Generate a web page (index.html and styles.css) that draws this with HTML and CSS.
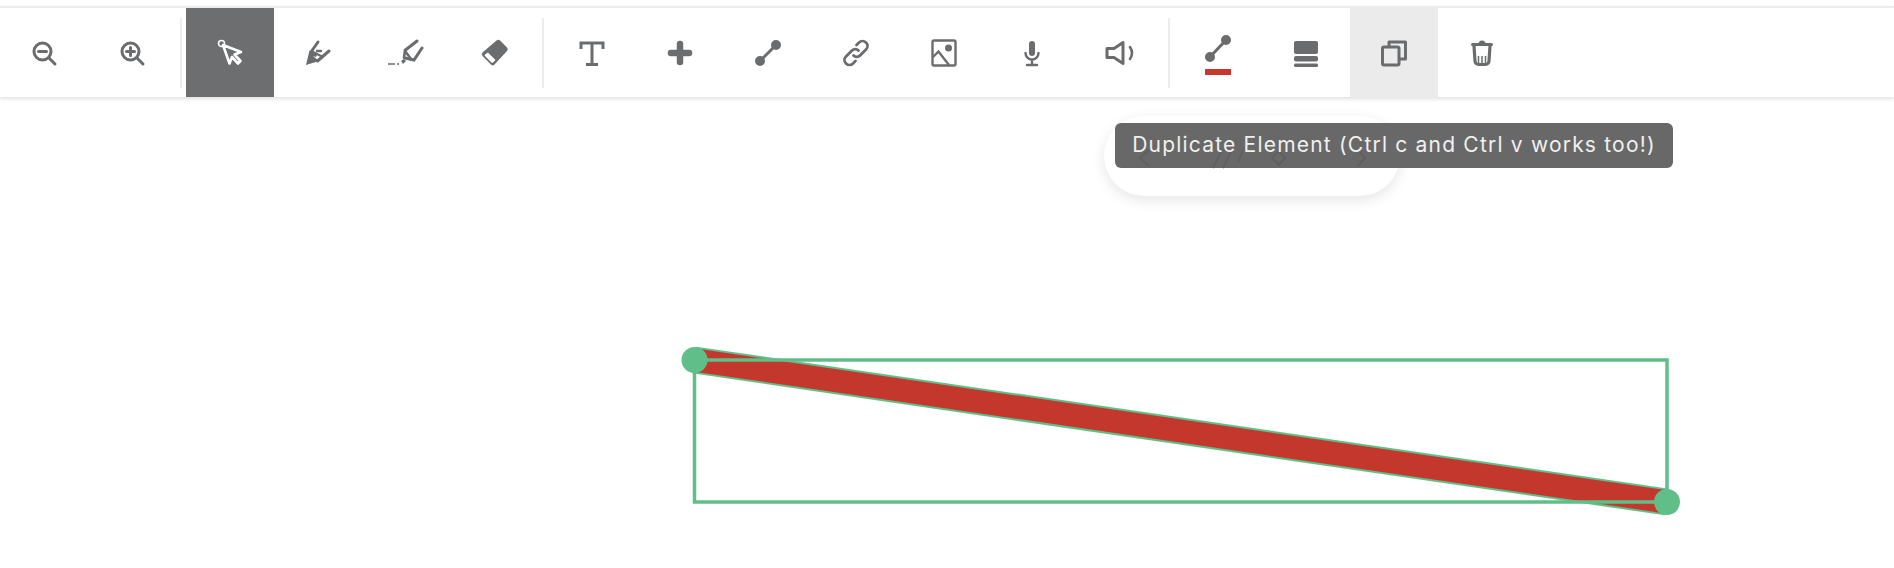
FILE: index.html
```html
<!DOCTYPE html>
<html lang="en">
<head>
    <meta charset="UTF-8">
    <title>Whiteboard</title>
    <link rel="stylesheet" href="styles.css">
</head>
<body>
    <div class="toolbar">
        <button class="tool">
            <svg class="icon" viewBox="0 0 30 30"><circle cx="13.500" cy="13.500" r="8.500"/><path d="M20 20l6 6M9.500 13.500h8"/></svg>
        </button>
        <button class="tool">
            <svg class="icon" viewBox="0 0 30 30"><circle cx="13.500" cy="13.500" r="8.500"/><path d="M20 20l6 6M9.500 13.500h8M13.500 9.500v8"/></svg>
        </button>
        <div class="separator"></div>

        <button class="tool tool-active">
            <svg class="icon" viewBox="0 0 30 30"><circle cx="6.500" cy="5.500" r="3" stroke-width="1.500"/><path stroke-width="2.600" stroke-linejoin="round" d="M8 7l18 7-6.500 2.500 6 6.500-2.500 2.500-6-6.500-2.500 6.500z"/></svg>
        </button>
        <button class="tool">
            <svg class="icon" viewBox="0 0 30 30"><path stroke-width="3" d="M15 4l-7 10M26 13L14.500 23"/><path class="solid" stroke="none" d="M6.500 12.500l4 1.500 3.500 3-1 2-3-1 6 5-13 4z"/><path stroke-width="2.400" d="M10 14l8 4M14 13l4 0"/></svg>
        </button>
        <button class="tool">
            <svg class="icon icon-wide" viewBox="0 0 36 30"><path stroke-width="3" d="M29 3l-11.500 9M34 10l-8 12-9-2"/><path stroke-width="2.600" d="M17 12l-1 8M17 13l6 8"/><path class="solid" stroke="none" d="M13 23l3-2 2 2-3 3z"/><path stroke-width="1.600" stroke-linecap="butt" d="M0 26h7M9 26h2"/></svg>
        </button>
        <button class="tool">
            <svg class="icon" viewBox="0 0 30 30"><path class="solid" stroke="none" d="M17.500 2.500a2.500 2.500 0 0 1 3.500 0l7 7a2.500 2.500 0 0 1 0 3.500l-12.500 13.500a2.500 2.500 0 0 1-3.500 0l-8.500-8.500a2.500 2.500 0 0 1 0-3.500z"/><path fill="#fff" stroke="none" d="M9 14.500l7.500 7.500-2.500 2.500a1 1 0 0 1-1.500 0l-6.500-6.500a1 1 0 0 1 0-1.500z"/></svg>
        </button>
        <div class="separator"></div>

        <button class="tool">
            <svg class="icon" viewBox="0 0 30 30"><path stroke-linecap="butt" d="M4 11V5h22v6M15 5v22M9 26.500h12"/></svg>
        </button>
        <button class="tool">
            <svg class="icon" viewBox="0 0 30 30"><path stroke-width="6.500" d="M15 6v18M6 15h18"/></svg>
        </button>
        <button class="tool">
            <svg class="icon" viewBox="0 0 30 30"><path d="M7 23L23 7"/><circle class="solid" cx="7" cy="23" r="3.500"/><circle class="solid" cx="23" cy="7" r="3.500"/></svg>
        </button>
        <button class="tool">
            <svg class="icon" viewBox="0 0 30 30"><path stroke-width="2.800" d="M12.500 17.500a4.500 4.500 0 0 0 6.500 0l6-6a4.900 4.900 0 0 0-7-7l-2.500 2.500"/><path stroke-width="2.800" d="M17.500 12.500a4.500 4.500 0 0 0-6.500 0l-6 6a4.900 4.900 0 0 0 7 7l2.500-2.500"/></svg>
        </button>
        <button class="tool">
            <svg class="icon" viewBox="0 0 30 30"><rect x="3.500" y="2.500" width="23" height="25" rx="1.500" stroke-width="2.400"/><path stroke-width="2.400" stroke-linecap="butt" d="M4 19l5.500-5.500L20 27"/><circle class="solid" cx="19.500" cy="10" r="3.500" stroke="none"/></svg>
        </button>
        <button class="tool">
            <svg class="icon" viewBox="0 0 30 30"><path stroke-width="6" d="M15 6v9"/><path stroke-width="2.400" d="M8.500 15a6.500 6.500 0 0 0 13 0M15 22v5M10 27h10"/></svg>
        </button>
        <button class="tool">
            <svg class="icon" viewBox="0 0 30 30"><path stroke-width="3" stroke-linejoin="round" d="M2 10.500h7L18 4.500v21l-9-6H2z"/><path stroke-width="2.600" d="M25 9q4 6 0 12"/></svg>
        </button>
        <div class="separator"></div>

        <button class="tool tool-color">
            <svg class="icon" viewBox="0 0 30 30"><path d="M7 24L23 7"/><circle class="solid" cx="7" cy="24" r="3.500"/><circle class="solid" cx="23" cy="7" r="3.500"/></svg>
            <span class="color-bar"></span>
        </button>
        <button class="tool">
            <svg class="icon" viewBox="0 0 30 30"><rect class="solid" stroke="none" x="3" y="3" width="24" height="13" rx="2"/><rect class="solid" stroke="none" x="3" y="18" width="24" height="5.500" rx="2"/><rect class="solid" stroke="none" x="3" y="25.500" width="24" height="3.500" rx="1.500"/></svg>
        </button>
        <button class="tool tool-hover">
            <svg class="icon" viewBox="0 0 30 30"><rect x="3.500" y="9" width="16.500" height="18" rx="1.500"/><path stroke-linejoin="round" d="M10 8.500V4h16.500v17h-6"/></svg>
        </button>
        <button class="tool">
            <svg class="icon" viewBox="0 0 30 30"><path stroke-width="3.200" d="M7 8l1 15a3.500 3.500 0 0 0 3.500 3.500h7a3.500 3.500 0 0 0 3.500-3.500l1-15"/><path stroke-width="3" d="M5.500 6.500h19"/><path stroke-width="1.500" stroke-linecap="butt" d="M11.500 18v7M15 18v7M18.500 18v7"/><path class="solid" stroke="none" d="M11.500 6a3.500 3.500 0 0 1 7 0z"/></svg>
        </button>
    </div>

    <svg class="canvas" viewBox="0 96 1894 472">
        <line class="shape-edge" x1="694" y1="360" x2="1667" y2="502"/>
        <line class="shape-fill" x1="694" y1="360" x2="1667" y2="502"/>
        <rect class="select-box" x="694.500" y="360" width="972.500" height="142"/>
        <circle class="handle" cx="694.500" cy="360" r="13"/>
        <circle class="handle" cx="1667" cy="502" r="13"/>
    </svg>

    <div class="line-menu">
        <svg class="menu-icons" viewBox="0 0 296 80">
            <path d="M45 34l-9 8 9 8M118 34l-9 18M128 34l-9 18M139 34l-5 12M168 42l7-7 6 7-6 7zM254 34l7 8-7 8"/>
        </svg>
    </div>
    <div class="tooltip">Duplicate Element (Ctrl c and Ctrl v works too!)</div>
</body>
</html>
```

FILE: styles.css
```css
* {
    margin: 0;
    padding: 0;
    box-sizing: border-box;
}

html, body {
    height: 100%;
    overflow: hidden;
}

body {
    background-color: #fff;
    padding-top: 6px;
    font-family: 'Inter', sans-serif;
}

.toolbar {
    display: flex;
    align-items: stretch;
    height: 91px;
    background-color: #fff;
    border-top: 2px solid #ececec;
    box-shadow: 0 2px 4px rgba(0,0,0,0.12);
}

.tool {
    position: relative;
    flex: none;
    display: flex;
    align-items: center;
    justify-content: center;
    width: 88px;
    border: none;
    background: none;
    color: #6b6c6e;
}

.tool-active {
    background-color: #6d6e70;
    color: #fff;
}

.tool-hover {
    background-color: #ebebeb;
}

.tool-color {
    align-items: flex-start;
    padding-top: 25px;
}

.color-bar {
    position: absolute;
    left: 31px;
    top: 61px;
    width: 26px;
    height: 6px;
    background-color: #c8372d;
}

.separator {
    flex: none;
    width: 2px;
    margin: 10px 4px 9px 4px;
    background-color: #ececec;
}

.icon {
    width: 30px;
    height: 30px;
    fill: none;
    stroke: currentColor;
    stroke-width: 3;
    stroke-linecap: round;
}

.icon-wide {
    width: 36px;
}

.icon .solid {
    fill: currentColor;
}

.canvas {
    display: block;
    width: 1894px;
    height: 472px;
    margin-top: -1px;
}

.shape-edge {
    stroke: #60bf89;
    stroke-width: 27;
}

.shape-fill {
    stroke: #c4372d;
    stroke-width: 23;
}

.select-box {
    fill: none;
    stroke: #60bf89;
    stroke-width: 3.5;
}

.handle {
    fill: #60bf89;
}

.line-menu {
    position: absolute;
    left: 1104px;
    top: 116px;
    width: 296px;
    height: 80px;
    background-color: #fff;
    border-radius: 40px;
    box-shadow: 0 4px 14px rgba(0,0,0,0.1);
}

.menu-icons {
    display: block;
    width: 296px;
    height: 80px;
    fill: none;
    stroke: #4f4f4f;
    stroke-width: 2;
}

.tooltip {
    position: absolute;
    left: 1115px;
    top: 123px;
    width: 558px;
    height: 45px;
    line-height: 44px;
    text-align: center;
    background-color: rgba(96,96,96,0.95);
    border-radius: 6px;
    color: #f0f0f0;
    font-size: 21px;
    letter-spacing: 1.2px;
    white-space: nowrap;
}
```
